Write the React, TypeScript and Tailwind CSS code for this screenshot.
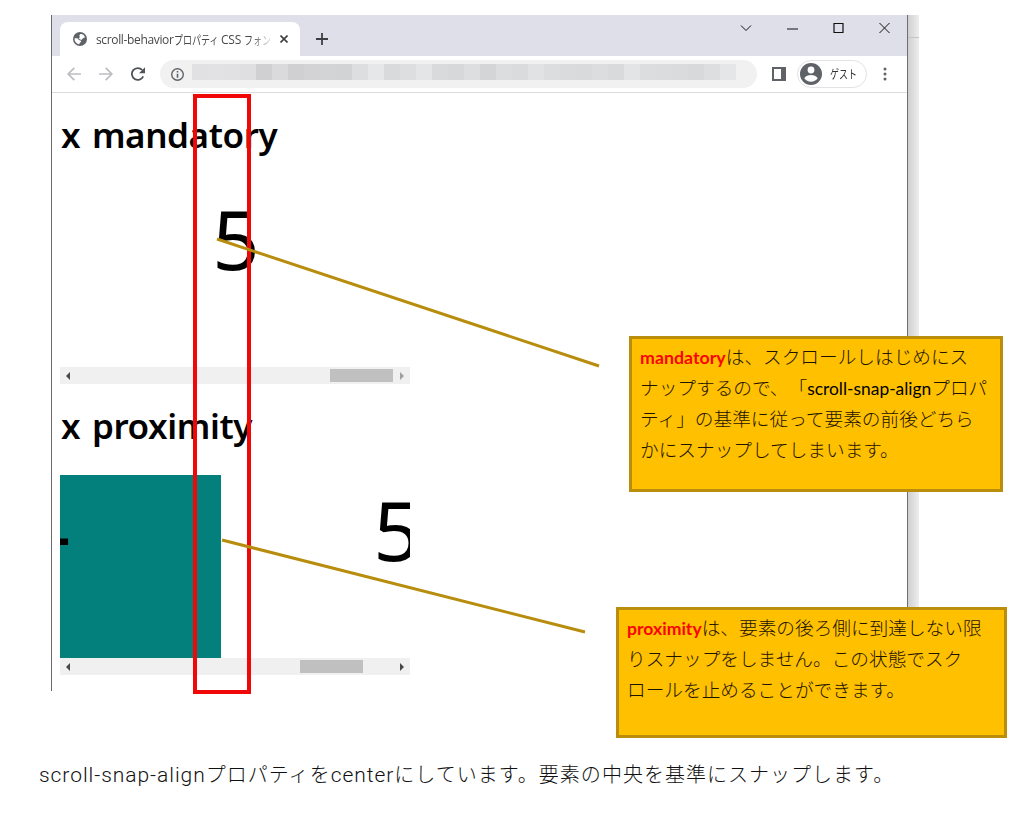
import type { ReactNode } from "react";

const JP = "font-['Noto_Sans_CJK_JP',sans-serif]";
const HEADING = "h-[91px] pl-px pt-[18px] font-['Noto_Sans',sans-serif] text-[35px] font-semibold leading-[48px] tracking-[-0.4px] [word-spacing:3px]";
const LATIN = "font-['Roboto',sans-serif] text-[21px] tracking-[0.95px]";

function Squeeze({ width, children }: { width: string; children: ReactNode }) {
  return (
    <span className={`inline-block shrink-0 ${width}`}>
      <span className="inline-block origin-left scale-x-75 whitespace-nowrap font-['Noto_Sans_CJK_JP',sans-serif]">{children}</span>
    </span>
  );
}

const mosaic = [
  "#e1e1e3", "#e2e2e4", "#e1e1e3", "#dfdfe1", "#d0d0d2", "#dadadc", "#d0d0d2", "#d3d3d5", "#d3d4d6", "#d2d3d5",
  "#dddee0", "#e6e7e9", "#d9dadc", "#dddee0", "#e4e5e7", "#d9dadc", "#d7d8da", "#dddee0", "#d4d5d7", "#dcdddf",
  "#dadbdd", "#e1e2e4", "#dcdddf", "#dadbdd", "#d9dadc", "#dcdddf", "#d9dadc", "#e3e4e6", "#dcdddf", "#dbdcde",
  "#dadbdd", "#d8d9db", "#dddee0", "#e5e6e8",
];

function TabStrip() {
  return (
    <div className="flex h-[41px] bg-[#dedfe8] pl-[8px]">
      <div className="mt-[7px] flex h-[34px] w-[240px] items-center rounded-t-[8px] bg-white pl-[13px]">
        <svg className="size-[14px] shrink-0" viewBox="0 0 14 14">
          <circle cx="7" cy="7" r="7" fill="#5f6368" />
          <path d="M7.3 2C9 1.7 11.5 3 12 5.2L10 6.2L8.4 7.9L6.3 7.1L5.8 6L7.2 4.9L6.1 3.9Z" fill="#fff" />
          <path d="M1.6 6.2L4.4 6.3L6 8L8 8.7L8.2 10L6.8 10.5L6.4 12.3C3.5 12 1.6 9.6 1.6 7.2Z" fill="#fff" />
        </svg>
        <div className="ml-[9px] mt-[2px] flex h-[20px] w-[175px] items-center overflow-hidden whitespace-nowrap font-['Open_Sans',sans-serif] text-[12px] leading-[20px] text-[#45474a] [mask-image:linear-gradient(to_right,#000_155px,transparent_178px)]">
          <span className="w-[78px] shrink-0 tracking-[-0.35px]">scroll-behavior</span>
          <Squeeze width="w-[47px]">プロパティ</Squeeze>
          <span className="w-[23px] shrink-0 tracking-[-0.2px]">CSS</span>
          <Squeeze width="w-[27px]">フォン</Squeeze>
        </div>
        <svg className="ml-[9px] size-[8px] shrink-0" viewBox="0 0 8 8" stroke="#3c4043" strokeWidth="1.6">
          <path d="M.5.5l7 7M7.5.5l-7 7" />
        </svg>
      </div>
      <svg className="ml-[16px] mt-[18px] size-[12px]" viewBox="0 0 12 12" stroke="#3c4043" strokeWidth="1.8">
        <path d="M6 0v12M0 6h12" />
      </svg>
      <div className="ml-auto mr-[17px] mt-[7px] flex h-[12px] items-center gap-[35px]">
        <svg className="size-[12px]" viewBox="0 0 12 12" fill="none" stroke="#111">
          <path d="M1 3.5l5 5 5-5" />
        </svg>
        <svg className="size-[11px]" viewBox="0 0 11 11" stroke="#111">
          <path d="M0 6h11" />
        </svg>
        <svg className="size-[11px]" viewBox="0 0 11 11" fill="none" stroke="#111">
          <path d="M1 .5h9v9H1z" strokeWidth="1.2" />
        </svg>
        <svg className="size-[11px]" viewBox="0 0 11 11" stroke="#111">
          <path d="M.5 0l10 10M10.5 0l-10 10" />
        </svg>
      </div>
    </div>
  );
}

function Toolbar() {
  return (
    <div className="flex h-[37px] items-center border-b border-[#dadce0] bg-white pl-[15px]">
      <svg className="size-[14px]" viewBox="0 0 14 14" fill="none" stroke="#bcbdc0" strokeWidth="1.7">
        <path d="M14 7H1M7.3.8L1.2 7l6.1 6.2" />
      </svg>
      <svg className="ml-[18px] size-[14px]" viewBox="0 0 14 14" fill="none" stroke="#bcbdc0" strokeWidth="1.7">
        <path d="M0 7h13M6.7.8L12.8 7l-6.1 6.2" />
      </svg>
      <svg className="ml-[18px] size-[14px]" viewBox="0 0 14 14">
        <path d="M12.2 9.3A5.9 5.9 0 1 1 11.2 3" fill="none" stroke="#505357" strokeWidth="1.8" />
        <path d="M14 .3V6.3H8z" fill="#505357" />
      </svg>
      <div className="ml-[15px] flex h-[28px] w-[597px] items-center rounded-full bg-[#f1f1f2] pl-[11px]">
        <svg className="size-[13px] shrink-0" viewBox="0 0 13 13">
          <circle cx="6.5" cy="6.5" r="5.8" fill="none" stroke="#5f6368" strokeWidth="1.4" />
          <path d="M5.7 5.7h1.6v4H5.7zM5.7 3.1h1.6v1.5H5.7z" fill="#5f6368" />
        </svg>
        <div className="-mt-[4px] ml-[8px] flex">
          {mosaic.map((color, i) => (
            <span key={i} className="h-[16px] w-[16px]" style={{ backgroundColor: color }} />
          ))}
        </div>
      </div>
      <svg className="ml-[15px] size-[14px]" viewBox="0 0 14 14">
        <path d="M0 0h14v14H0zM2 2v10h7V2z" fill="#5f6368" fillRule="evenodd" />
      </svg>
      <div className="ml-[11px] flex h-[28px] w-[70px] items-center rounded-full border border-[#e2e3e6] pl-[2px]">
        <svg className="size-[22px] shrink-0" viewBox="0 0 22 22">
          <circle cx="11" cy="11" r="11" fill="#5f6368" />
          <circle cx="11" cy="7" r="3.4" fill="#fff" />
          <path d="M4.3 15.2c1.3-2.3 4-3.3 6.7-3.3s5.4 1 6.7 3.3c-1.5 2.2-4 3.6-6.7 3.6s-5.2-1.4-6.7-3.6z" fill="#fff" />
        </svg>
        <span className="ml-[8px] text-[12px] leading-[20px] text-[#333]">
          <Squeeze width="w-[27px]">ゲスト</Squeeze>
        </span>
      </div>
      <svg className="ml-[16px] h-[14px] w-[4px]" viewBox="0 0 4 14" fill="#5f6368">
        <circle cx="2" cy="2" r="1.5" />
        <circle cx="2" cy="7" r="1.5" />
        <circle cx="2" cy="12" r="1.5" />
      </svg>
    </div>
  );
}

function ScrollBar({ thumb, atEnd }: { thumb: string; atEnd?: boolean }) {
  return (
    <div className="flex h-[17px] items-center bg-[#f0f0f0]">
      <svg className="ml-[6px] h-[8px] w-[4px]" viewBox="0 0 4 8">
        <path d="M4 0v8L0 4z" fill="#484848" />
      </svg>
      <div className={`h-[13px] w-[63px] bg-[#c0c0c0] ${thumb}`} />
      <svg className="ml-auto mr-[6px] h-[8px] w-[4px]" viewBox="0 0 4 8">
        <path d="M0 0v8l4-4z" fill={atEnd ? "#a0a0a0" : "#484848"} />
      </svg>
    </div>
  );
}

function Slide({ n, className }: { n: number; className: string }) {
  return (
    <div className={`h-[183px] w-[350px] shrink-0 text-center font-['Noto_Sans',sans-serif] text-[83px] ${className}`}>
      {n}
    </div>
  );
}

function Callout({ className, children }: { className: string; children: ReactNode }) {
  return (
    <div className={`absolute border-3 border-[#ba8e0b] bg-[#ffc000] pl-[8px] pt-px whitespace-nowrap text-[18.67px] leading-[31px] text-[#1c1300] font-light [text-spacing-trim:space-all] ${JP} ${className}`}>
      {children}
    </div>
  );
}

export default function App() {
  return (
    <div className="relative h-[813px] w-[1027px] overflow-hidden bg-white pt-[15px] text-black">
      <div className="ml-[51px] flex h-[676px]">
        <div className="w-[856px] border-l border-[#6b6b6b]">
          <TabStrip />
          <Toolbar />
          <div className="pl-[8px]">
            <h1 className={HEADING}>x mandatory</h1>
            <div className="w-[350px]">
              <div className="flex overflow-hidden">
                <Slide n={5} className="bg-white pl-[2px] leading-[107px]" />
              </div>
              <ScrollBar thumb="ml-[260px]" atEnd />
            </div>
            <h1 className={HEADING}>x proximity</h1>
            <div className="w-[350px]">
              <div className="flex overflow-hidden">
                <Slide n={4} className="-ml-[189px] bg-[#037f7c] leading-[101px]" />
                <Slide n={5} className="bg-white pl-[2px] leading-[107px]" />
              </div>
              <ScrollBar thumb="ml-[230px]" />
            </div>
          </div>
        </div>
        <div className="h-[600px] w-[12px] border-l border-[#707070] bg-linear-to-r from-[#cfcfcf] to-[#eeeeee]">
          <div className="h-[23px] border-b border-[#c4c4c4]" />
        </div>
      </div>
      <p className={`ml-[39px] mt-[67px] whitespace-nowrap text-[20px] leading-[32px] font-light tracking-[1.02px] text-[#111] ${JP}`}>
        <span className={LATIN}>scroll-snap-align</span>プロパティを
        <span className={LATIN}>center</span>にしています。要素の中央を基準にスナップします。
      </p>

      <div className="absolute left-[193px] top-[94px] h-[600px] w-[58px] border-4 border-[#f00808]" />
      <svg className="pointer-events-none absolute left-0 top-0" width="1027" height="813" stroke="#b88d0d" strokeWidth="3">
        <path d="M217 239L599 366M222 540L585 632" />
      </svg>
      <Callout className="left-[629px] top-[336px] h-[156px] w-[374px]">
        <div className="h-[31px]"><span className="font-['Lato',sans-serif] text-[17.8px] font-bold text-[#fa0505]">mandatory</span>は、スクロールしはじめにス</div>
        <div className="h-[31px]">ナップするので、「<span className="font-['Lato',sans-serif] text-[17.4px] font-normal text-black">scroll-snap-align</span>プロパ</div>
        <div className="h-[31px]">ティ」の基準に従って要素の前後どちら</div>
        <div className="h-[31px]">かにスナップしてしまいます。</div>
      </Callout>
      <Callout className="left-[616px] top-[607px] h-[131px] w-[391px]">
        <div className="h-[31px]"><span className="font-['Lato',sans-serif] text-[17.6px] font-bold text-[#fa0505]">proximity</span>は、要素の後ろ側に到達しない限</div>
        <div className="h-[31px]">りスナップをしません。この状態でスク</div>
        <div className="h-[31px]">ロールを止めることができます。</div>
      </Callout>
    </div>
  );
}
